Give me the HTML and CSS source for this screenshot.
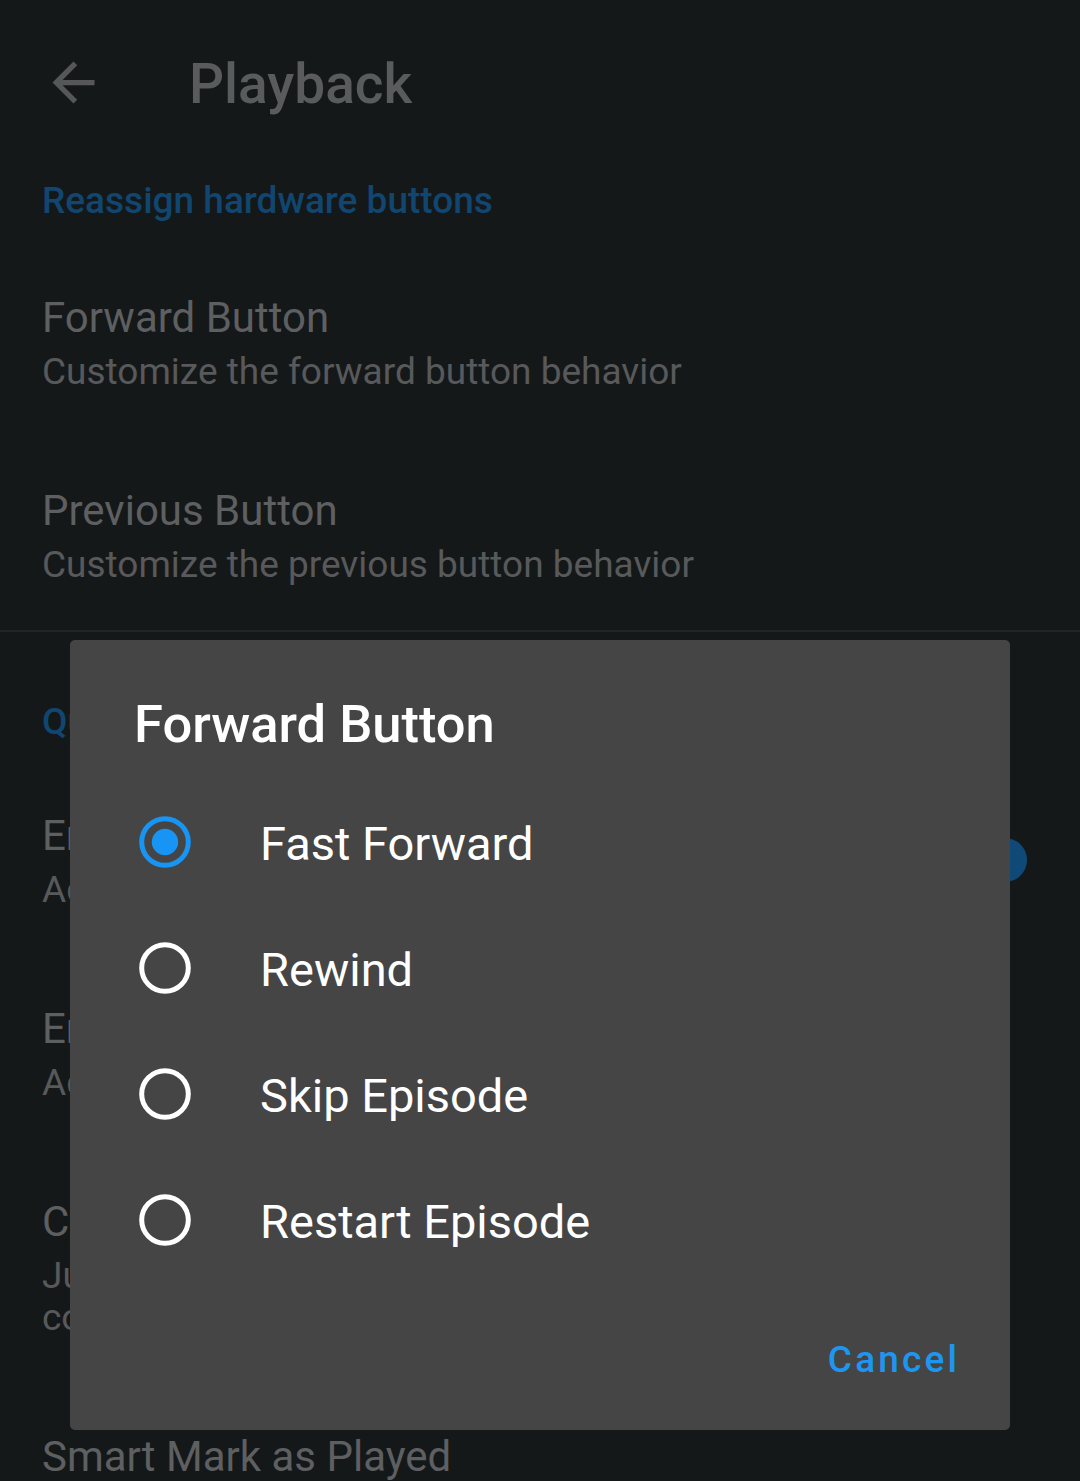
FILE: index.html
```html
<!DOCTYPE html>
<html lang="en">
<head>
<meta charset="utf-8">
<title>Playback</title>
<link rel="stylesheet" href="styles.css">
</head>
<body>
<div class="screen">
  <header class="toolbar">
    <svg class="back" viewBox="0 0 24 24" width="63" height="63"><path d="M20 11H7.83l5.59-5.59L12 4l-8 8 8 8 1.41-1.41L7.83 13H20v-2z" fill="currentColor"/></svg>
    <h1 class="toolbar-title">Playback</h1>
  </header>

  <section class="group">
    <h2 class="category cat-first">Reassign hardware buttons</h2>
    <div class="pref">
      <div class="pref-text">
        <div class="pref-title">Forward Button</div>
        <div class="pref-summary">Customize the forward button behavior</div>
      </div>
    </div>
    <div class="pref">
      <div class="pref-text">
        <div class="pref-title">Previous Button</div>
        <div class="pref-summary">Customize the previous button behavior</div>
      </div>
    </div>
  </section>

  <section class="group group-queue">
    <h2 class="category cat-queue">Queue</h2>
    <div class="pref">
      <div class="pref-text">
        <div class="pref-title">Enqueue Downloaded</div>
        <div class="pref-summary">Add downloaded episodes to the queue</div>
      </div>
      <div class="switch"><span class="track"></span><span class="thumb"></span></div>
    </div>
    <div class="pref">
      <div class="pref-text">
        <div class="pref-title">Enqueue Location</div>
        <div class="pref-summary">Add episodes to: Back</div>
      </div>
    </div>
    <div class="pref">
      <div class="pref-text">
        <div class="pref-title">Continuous Playback</div>
        <div class="pref-summary">Jump to next queue item when playback of an episode<br>completes</div>
      </div>
    </div>
    <div class="pref">
      <div class="pref-text">
        <div class="pref-title">Smart Mark as Played</div>
      </div>
    </div>
  </section>

  <div class="dialog">
    <h3 class="dialog-title">Forward Button</h3>
    <ul class="options">
      <li class="option">
        <svg class="radio" viewBox="0 0 60 60" width="60" height="60"><circle cx="30" cy="30" r="23.3" fill="none" stroke="#1894f4" stroke-width="5"/><circle cx="30" cy="30" r="13.2" fill="#1894f4"/></svg>
        <span class="option-label">Fast Forward</span>
      </li>
      <li class="option">
        <svg class="radio" viewBox="0 0 60 60" width="60" height="60"><circle cx="30" cy="30" r="23.3" fill="none" stroke="#ffffff" stroke-width="5"/></svg>
        <span class="option-label">Rewind</span>
      </li>
      <li class="option">
        <svg class="radio" viewBox="0 0 60 60" width="60" height="60"><circle cx="30" cy="30" r="23.3" fill="none" stroke="#ffffff" stroke-width="5"/></svg>
        <span class="option-label">Skip Episode</span>
      </li>
      <li class="option">
        <svg class="radio" viewBox="0 0 60 60" width="60" height="60"><circle cx="30" cy="30" r="23.3" fill="none" stroke="#ffffff" stroke-width="5"/></svg>
        <span class="option-label">Restart Episode</span>
      </li>
    </ul>
    <div class="dialog-actions">
      <span class="btn-text">Cancel</span>
    </div>
  </div>
</div>
</body>
</html>
```

FILE: styles.css
```css
* { box-sizing: border-box; }
html, body {
  margin: 0;
  padding: 0;
  background: #151819;
}
body {
  font-family: Roboto, "Noto Sans", "Liberation Sans", sans-serif;
  color: #5e5f61;
}
.screen {
  position: relative;
  width: 1080px;
  height: 1481px;
  overflow: hidden;
  background: #151819;
}
.toolbar {
  display: flex;
  align-items: center;
  height: 164px;
  padding-left: 42px;
}
.back {
  color: #565758;
  flex: none;
}
.toolbar-title {
  margin: 0 0 0 84px;
  padding-top: 4px;
  font-size: 55px;
  line-height: 64px;
  font-weight: 500;
  color: #5a5b5c;
}
.category {
  margin: 0;
  padding: 0 42px;
  font-size: 37px;
  line-height: 40px;
  font-weight: 500;
  color: #10466f;
}
.cat-first {
  margin-top: 17px;
  margin-bottom: 23px;
}
.cat-queue {
  margin-top: 70px;
  margin-bottom: 20px;
}
.group {
  border-bottom: 2px solid #212426;
}
.group-queue {
  border-bottom: none;
}
.pref {
  display: flex;
  align-items: center;
  padding: 46px 53px 44px 42px;
}
.pref-text {
  flex: 1;
  min-width: 0;
}
.pref-title {
  font-size: 42px;
  line-height: 56px;
  color: #5e5f61;
  white-space: nowrap;
}
.pref-summary {
  margin-top: 5px;
  font-size: 37px;
  line-height: 42px;
  color: #58595b;
}
.switch {
  position: relative;
  flex: none;
  width: 90px;
  height: 44px;
}
.track {
  position: absolute;
  left: 0;
  right: 0;
  top: 4px;
  height: 36px;
  border-radius: 18px;
  background: #0c2a42;
}
.thumb {
  position: absolute;
  right: 0;
  top: 0;
  width: 44px;
  height: 44px;
  border-radius: 50%;
  background: #0f4978;
}
.dialog {
  position: absolute;
  left: 70px;
  top: 640px;
  width: 940px;
  height: 790px;
  background: #454545;
  border-radius: 5px;
  display: flex;
  flex-direction: column;
}
.dialog-title {
  margin: 54px 0 0 0;
  padding-left: 64px;
  font-size: 52.5px;
  line-height: 60px;
  font-weight: 500;
  color: #ffffff;
}
.options {
  list-style: none;
  margin: 25px 0 0 0;
  padding: 0;
}
.option {
  display: flex;
  align-items: center;
  height: 126px;
  padding-left: 65px;
}
.radio {
  flex: none;
}
.option-label {
  margin-left: 65px;
  padding-top: 4px;
  font-size: 47px;
  line-height: 56px;
  color: #ffffff;
}
.dialog-actions {
  margin-top: auto;
  display: flex;
  justify-content: flex-end;
  padding: 0 50px 48px 0;
}
.btn-text {
  font-size: 37px;
  line-height: 44px;
  font-weight: 500;
  letter-spacing: 0.085em;
  color: #1e96ef;
}
```
